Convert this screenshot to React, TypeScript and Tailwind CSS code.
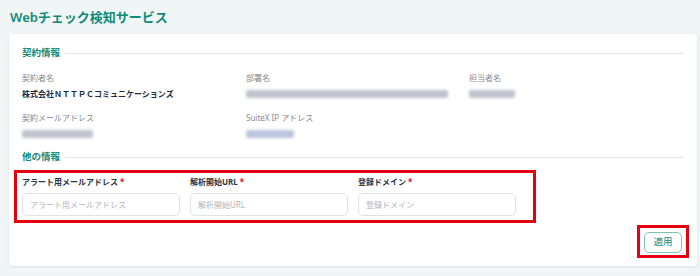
import React from "react";

const Blur = ({ w, tint }: { w: number; tint?: boolean }) => (
  <div className="flex items-center h-[16px]">
    <div
      className={`h-[8px] rounded-[2px] blur-[1.6px] ${tint ? "bg-[#bcc5dc]" : "bg-[#c0c3ce]"}`}
      style={{ width: w }}
    />
  </div>
);

const SectionHeading = ({ title }: { title: string }) => (
  <div className="flex items-center gap-[5px] h-[14px]">
    <span className="text-[9.5px] leading-[14px] font-bold text-[#138a78] whitespace-nowrap">{title}</span>
    <div className="flex-1 h-px bg-[#e3e6e9]" />
  </div>
);

const Label = ({ children }: { children: React.ReactNode }) => (
  <div className="h-[16px] leading-[16px] text-[8px] text-[#868a93] whitespace-nowrap">{children}</div>
);

const Field = ({ label, ph }: { label: string; ph: string }) => (
  <div className="w-[158px] flex flex-col">
    <div className="h-[14px] leading-[14px] text-[8px] font-bold text-[#2b3243] whitespace-nowrap">
      {label}
      <span className="text-[#e60012] ml-[2px]">*</span>
    </div>
    <input
      className="mt-[4px] h-[23px] w-full border border-[#dfe3e8] rounded-[5px] px-[7px] text-[8px] outline-none placeholder:text-[#b1b5bb]"
      placeholder={ph}
    />
  </div>
);

export default function App() {
  return (
    <div
      className="w-[700px] h-[276px] bg-[#f0f6f6] overflow-hidden"
      style={{ fontFamily: '"Noto Sans", "Noto Sans CJK JP", sans-serif' }}
    >
      <div className="pt-[9px] pl-[10px] h-[25px] text-[13px] leading-[16px] font-semibold text-[#138a78]">
        Webチェック検知サービス
      </div>
      <div className="mt-[9px] ml-[9px] w-[688px] h-[232px] bg-white rounded-[4px] shadow-[0_1px_3px_rgba(0,0,0,0.08)] pt-[12px] pl-[13px] pr-[14px]">
        <SectionHeading title="契約情報" />
        <div className="mt-[10px] grid grid-cols-[224px_223px_1fr]">
          <div>
            <Label>契約者名</Label>
            <div className="h-[16px] leading-[16px] text-[8px] font-bold text-[#1e2a40] whitespace-nowrap">
              株式会社ＮＴＴＰＣコミュニケーションズ
            </div>
          </div>
          <div>
            <Label>部署名</Label>
            <Blur w={202} />
          </div>
          <div>
            <Label>担当者名</Label>
            <Blur w={46} />
          </div>
        </div>
        <div className="mt-[8px] grid grid-cols-[224px_223px_1fr]">
          <div>
            <Label>契約メールアドレス</Label>
            <Blur w={71} />
          </div>
          <div>
            <Label>SuiteX IP アドレス</Label>
            <Blur w={48} tint />
          </div>
          <div />
        </div>
        <div className="mt-[8px]">
          <SectionHeading title="他の情報" />
        </div>
        <div className="mt-[6px] -ml-[8px] w-[522px] border-[3px] border-[#e60012] pl-[5px] pt-[2px] pb-[4px] flex gap-[10px]">
          <Field label="アラート用メールアドレス" ph="アラート用メールアドレス" />
          <Field label="解析開始URL" ph="解析開始URL" />
          <Field label="登録ドメイン" ph="登録ドメイン" />
        </div>
        <div className="mt-[2px] flex justify-end">
          <div className="-mr-[6px] border-[3px] border-[#e60012] px-[4px] pt-[4px] pb-[2px]">
            <button className="w-[38px] h-[21px] border border-[#7cc4b8] rounded-[5px] text-[9.5px] text-[#138a78] bg-white flex items-center justify-center">
              適用
            </button>
          </div>
        </div>
      </div>
    </div>
  );
}
